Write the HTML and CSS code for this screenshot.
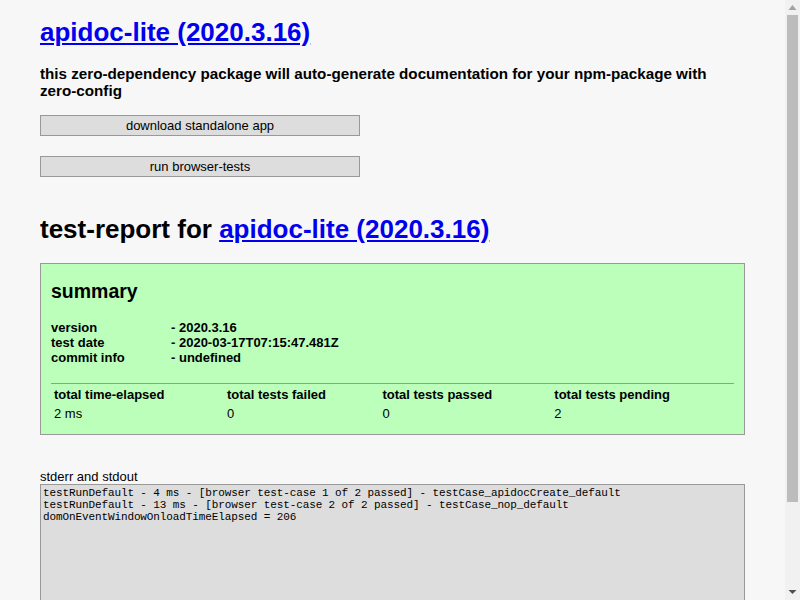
FILE: index.html
```html
<!DOCTYPE html>
<html>
<head>
<meta charset="utf-8">
<title>apidoc-lite test-report</title>
<link rel="stylesheet" href="styles.css">
</head>
<body>
<h1 class="title"><a href="#">apidoc-lite (2020.3.16)</a></h1>
<h3 class="desc">this zero-dependency package will auto-generate documentation for your npm-package with zero-config</h3>
<div class="actions">
  <button class="btn">download standalone app</button>
  <button class="btn">run browser-tests</button>
</div>
<h1 class="report-title">test-report for <a href="#">apidoc-lite (2020.3.16)</a></h1>
<div class="summary">
  <h2 class="summary-title">summary</h2>
  <div class="info">
    <span>version</span><span>- 2020.3.16</span>
    <span>test date</span><span>- 2020-03-17T07:15:47.481Z</span>
    <span>commit info</span><span>- undefined</span>
  </div>
  <table class="totals">
    <thead>
      <tr><th>total time-elapsed</th><th>total tests failed</th><th>total tests passed</th><th>total tests pending</th></tr>
    </thead>
    <tbody>
      <tr><td>2 ms</td><td>0</td><td>0</td><td>2</td></tr>
    </tbody>
  </table>
</div>
<div class="log-label">stderr and stdout</div>
<pre class="log">testRunDefault - 4 ms - [browser test-case 1 of 2 passed] - testCase_apidocCreate_default
testRunDefault - 13 ms - [browser test-case 2 of 2 passed] - testCase_nop_default
domOnEventWindowOnloadTimeElapsed = 206</pre>
<div class="scrollbar" aria-hidden="true">
  <svg width="15" height="600" viewBox="0 0 15 600">
    <rect x="0" y="0" width="15" height="600" fill="#f1f1f1"/>
    <polygon points="3.5,10 11.5,10 7.5,5" fill="#a3a3a3"/>
    <rect x="2" y="15" width="11" height="487" fill="#bcbcbc"/>
    <polygon points="3.5,590 11.5,590 7.5,594" fill="#505050"/>
  </svg>
</div>
</body>
</html>
```
FILE: styles.css
```css
html {
  background: #f7f7f7;
  overflow: hidden;
}
body {
  margin: 0 55px 0 40px;
  padding-bottom: 16px;
  font-family: "Liberation Sans", Arial, sans-serif;
  font-size: 13px;
  font-weight: bold;
  color: #000;
}
a {
  color: #0000ee;
}
.title {
  font-size: 26px;
  margin: 17px 0 0;
}
.desc {
  font-size: 15.21px;
  margin: 17px 0 0;
  line-height: 17px;
}
.actions {
  display: flex;
  flex-direction: column;
  gap: 20px;
  margin-top: 16px;
}
.btn {
  display: block;
  width: 320px;
  background: #ddd;
  border: 1px solid #999;
  color: #000;
  font-family: "Liberation Sans", Arial, sans-serif;
  font-size: 13px;
  font-weight: normal;
  line-height: 15px;
  padding: 2px;
  margin: 0;
}
.report-title {
  font-size: 26px;
  margin: 37px 0 0;
  line-height: 30px;
}
.summary {
  margin-top: 19px;
  background: #bfb;
  border: 1px solid #999;
  padding: 10px;
}
.summary-title {
  font-size: 19.5px;
  margin: 6px 0 0;
  line-height: 22px;
}
.info {
  display: grid;
  grid-template-columns: 120px auto;
  line-height: 15px;
  margin-top: 18px;
}
.totals {
  width: 100%;
  margin-top: 18px;
  border-top: 1px solid #999;
  border-collapse: separate;
  border-spacing: 2px;
}
.totals th,
.totals td {
  text-align: left;
  padding: 1px;
  line-height: 15px;
}
.totals td {
  font-weight: normal;
}
.log-label {
  margin-top: 34px;
  font-weight: normal;
  line-height: 15px;
}
.log {
  margin: 0;
  height: 198px;
  background: #ddd;
  border: 1px solid #999;
  padding: 2px;
  font-family: "Liberation Mono", "Courier New", monospace;
  font-size: 11px;
  letter-spacing: -0.11px;
  line-height: 12px;
  font-weight: normal;
}
.scrollbar {
  position: fixed;
  z-index: 1000;
  top: 0;
  right: 0;
  width: 15px;
  height: 600px;
  line-height: 0;
}
.scrollbar svg {
  display: block;
}
```
